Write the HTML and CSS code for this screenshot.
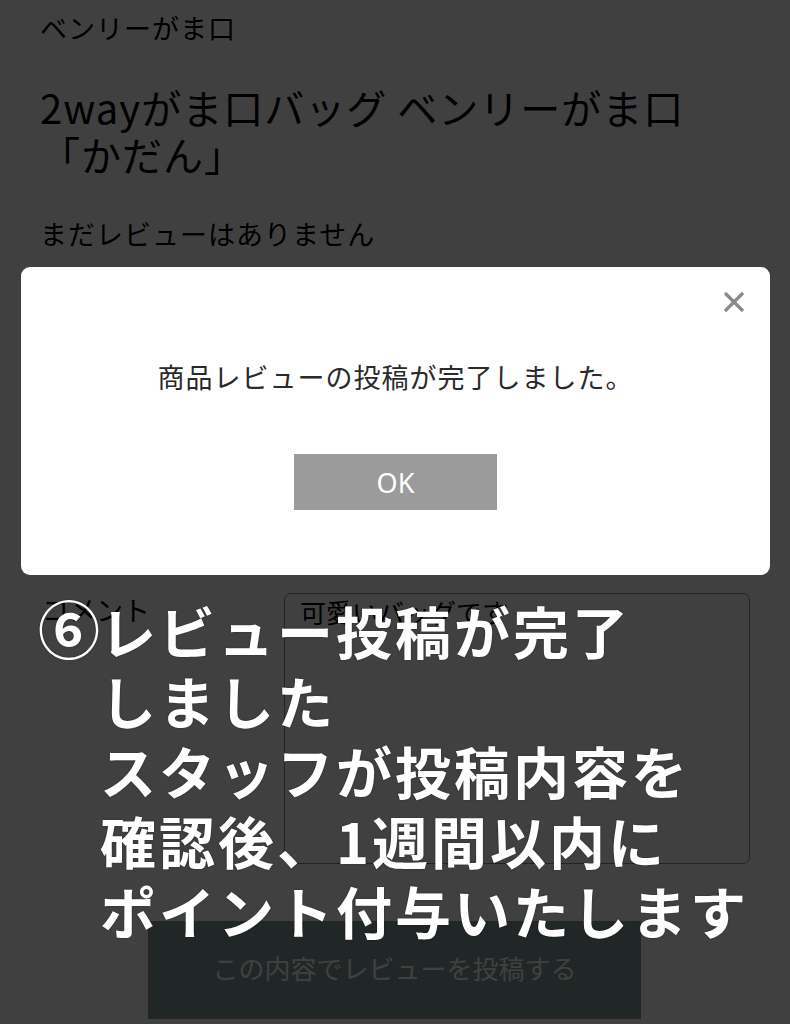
FILE: index.html
```html
<!DOCTYPE html>
<html lang="ja">
<head>
<meta charset="utf-8">
<title>商品レビュー</title>
<link rel="stylesheet" href="styles.css">
</head>
<body>
<main class="page">
  <p class="shop">ベンリーがま口</p>
  <h1 class="title">2wayがま口バッグ ベンリーがま口<br>「かだん」</h1>
  <p class="no-review">まだレビューはありません</p>

  <form class="review-form">
    <div class="row comment-row">
      <span class="label">コメント</span>
      <div class="textarea">可愛いバッグです</div>
    </div>
    <div class="submit-wrap">
      <button type="button" class="submit">この内容でレビューを投稿する</button>
    </div>
  </form>
</main>

<div class="overlay"></div>

<div class="modal">
  <div class="modal-head">
    <button type="button" class="close" aria-label="閉じる">
      <svg width="22" height="22" viewBox="0 0 22 22"><path d="M2 2 L20 20 M20 2 L2 20" stroke="#8a8a8a" stroke-width="3.2" stroke-linecap="butt"/></svg>
    </button>
  </div>
  <p class="modal-msg">商品レビューの投稿が完了しました。</p>
  <button type="button" class="ok">OK</button>
</div>

<p class="note"><span class="num">⑥</span>レビュー投稿が完了<br>しました<br>スタッフが投稿内容を<br>確認後、1週間以内に<br>ポイント付与いたします</p>
</body>
</html>
```

FILE: styles.css
```css
html, body {
  margin: 0;
  padding: 0;
  background: #ffffff;
}
body {
  font-family: "Noto Sans CJK JP", "Noto Sans", sans-serif;
  color: #000;
  width: 790px;
  height: 1024px;
  overflow: hidden;
  position: relative;
}
.page {
  padding: 10px 40px 0 40px;
}
.shop {
  margin: 0;
  font-size: 27px;
  line-height: 36px;
  letter-spacing: 1px;
  font-weight: 400;
}
.title {
  margin: 38px 0 0 0;
  font-size: 40px;
  line-height: 47px;
  font-weight: 400;
  letter-spacing: 1px;
}
.no-review {
  margin: 38px 0 0 0;
  font-size: 27px;
  line-height: 36px;
  letter-spacing: 1px;
}
.review-form {
  margin: 341px 0 0 0;
}
.row {
  display: flex;
  align-items: flex-start;
}
.label {
  width: 244px;
  flex: none;
  font-size: 27px;
  line-height: 36px;
  padding-left: 2px;
  box-sizing: border-box;
}
.comment-row .label {
  margin-top: -1px;
}
.textarea {
  width: 466px;
  height: 271px;
  box-sizing: border-box;
  border: 1.5px solid #8a8a8a;
  border-radius: 7px;
  padding: 1px 15px;
  font-size: 26px;
  line-height: 34px;
  background: #fff;
}
.submit-wrap {
  padding-left: 108px;
  margin-top: 57px;
}
.submit {
  width: 493px;
  height: 98px;
  border: none;
  background: #849999;
  color: #ffffff;
  font-family: inherit;
  font-size: 26px;
  padding: 0 0 6px 0;
}
.overlay {
  position: absolute;
  inset: 0;
  background: rgba(0, 0, 0, 0.75);
}
.modal {
  position: absolute;
  left: 21px;
  top: 267px;
  width: 749px;
  height: 308px;
  box-sizing: border-box;
  background: #ffffff;
  border-radius: 9px;
  display: flex;
  flex-direction: column;
  align-items: center;
}
.modal-head {
  align-self: stretch;
  display: flex;
  justify-content: flex-end;
  padding: 24px 25px 0 0;
}
.close {
  width: 22px;
  height: 22px;
  padding: 0;
  border: none;
  background: none;
  display: block;
}
.close svg {
  display: block;
}
.modal-msg {
  margin: 46px 0 0 0;
  font-size: 27px;
  line-height: 36px;
  letter-spacing: 1px;
  color: #2a2a2a;
}
.ok {
  margin-top: 59px;
  width: 203px;
  height: 56px;
  border: none;
  background: #9b9b9b;
  color: #ffffff;
  font-family: "Noto Sans", sans-serif;
  font-size: 27px;
  font-weight: 400;
  padding: 0;
}
.note {
  position: absolute;
  left: 38px;
  top: 595px;
  margin: 0;
  padding-left: 62px;
  text-indent: -62px;
  font-family: "Noto Sans CJK JP", sans-serif;
  font-weight: 700;
  font-size: 56px;
  line-height: 70px;
  letter-spacing: 3px;
  color: #ffffff;
  text-shadow: 0 0 2px rgba(0, 0, 0, 0.35);
}
.num {
  font-size: 62px;
  line-height: 1;
  letter-spacing: 0;
}
```
